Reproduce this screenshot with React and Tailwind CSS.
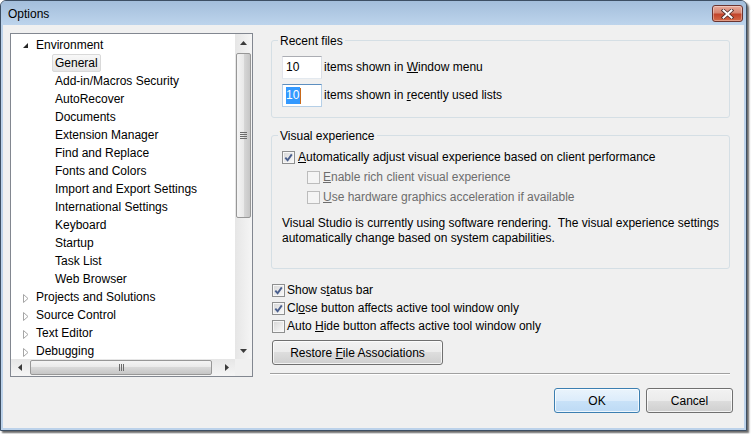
import React from "react";

const treeItems = [
  { label: "Environment", level: 0, open: true },
  { label: "General", level: 1, selected: true },
  { label: "Add-in/Macros Security", level: 1 },
  { label: "AutoRecover", level: 1 },
  { label: "Documents", level: 1 },
  { label: "Extension Manager", level: 1 },
  { label: "Find and Replace", level: 1 },
  { label: "Fonts and Colors", level: 1 },
  { label: "Import and Export Settings", level: 1 },
  { label: "International Settings", level: 1 },
  { label: "Keyboard", level: 1 },
  { label: "Startup", level: 1 },
  { label: "Task List", level: 1 },
  { label: "Web Browser", level: 1 },
  { label: "Projects and Solutions", level: 0 },
  { label: "Source Control", level: 0 },
  { label: "Text Editor", level: 0 },
  { label: "Debugging", level: 0 },
];

function Arrow({ dir }) {
  const pts = {
    up: "0,4 7,4 3.5,0",
    down: "0,0 7,0 3.5,4",
    left: "4,0 4,7 0,3.5",
    right: "0,0 0,7 4,3.5",
  }[dir];
  const vert = dir === "up" || dir === "down";
  return (
    <svg width={vert ? 7 : 4} height={vert ? 4 : 7} viewBox={vert ? "0 0 7 4" : "0 0 4 7"}>
      <polygon points={pts} fill="#3b3b3b" />
    </svg>
  );
}

function TreeRow({ item }) {
  if (item.level === 0) {
    return (
      <div className="h-[18px] flex items-center pl-[11px] whitespace-nowrap">
        <span className="w-[14px] flex items-center">
          {item.open ? (
            <svg width="7" height="7" viewBox="0 0 7 7">
              <polygon points="6,1 6,6 1,6" fill="#262626" />
            </svg>
          ) : (
            <svg width="7" height="9" viewBox="0 0 7 9" className="ml-[1px] mt-[2px]">
              <polygon points="0.5,0.5 0.5,8.5 5,4.5" fill="white" stroke="#a6a6a6" />
            </svg>
          )}
        </span>
        <span>{item.label}</span>
      </div>
    );
  }
  return (
    <div className="h-[18px] flex items-center whitespace-nowrap">
      <span
        className={`ml-[41px] px-[2px] h-[18px] leading-[16px] border rounded-[2px] ${
          item.selected
            ? "border-[#d9d9d9] bg-[linear-gradient(to_bottom,#f8f8f8,#e5e5e5)]"
            : "border-transparent"
        }`}
      >
        {item.label}
      </span>
    </div>
  );
}

function Tree() {
  return (
    <div className="w-[243px] h-[344px] border border-[#828790] bg-white flex flex-col">
      <div className="flex flex-1 min-h-0">
        <div className="flex-1 overflow-hidden pt-[2px]">
          {treeItems.map((it) => (
            <TreeRow key={it.label} item={it} />
          ))}
        </div>
        <div className="w-[17px] flex flex-col bg-[linear-gradient(to_right,#e6e6e6,#f5f5f5)]">
          <div className="h-[17px] flex items-center justify-center">
            <Arrow dir="up" />
          </div>
          <div className="mt-[2px] mx-[1px] h-[165px] rounded-[2px] border border-[#979797] bg-[linear-gradient(to_right,#f4f4f4,#e9e9e9_50%,#d8d8d8_50%,#c6c6c6)] flex flex-col items-center justify-center gap-[1px]">
            <div className="w-[7px] h-px bg-[#6b6b6b]" />
            <div className="w-[7px] h-px bg-[#6b6b6b]" />
            <div className="w-[7px] h-px bg-[#6b6b6b]" />
            <div className="w-[7px] h-px bg-[#6b6b6b]" />
          </div>
          <div className="flex-1" />
          <div className="h-[17px] flex items-center justify-center">
            <Arrow dir="down" />
          </div>
        </div>
      </div>
      <div className="flex h-[17px]">
        <div className="flex-1 flex items-center bg-[linear-gradient(to_bottom,#e6e6e6,#f5f5f5)]">
          <div className="w-[17px] h-[17px] flex items-center justify-center">
            <Arrow dir="left" />
          </div>
          <div className="ml-[2px] w-[182px] h-[15px] rounded-[2px] border border-[#979797] bg-[linear-gradient(to_bottom,#f4f4f4,#e9e9e9_50%,#d8d8d8_50%,#c6c6c6)] flex items-center justify-center gap-[1px]">
            <div className="w-px h-[7px] bg-[#6b6b6b]" />
            <div className="w-px h-[7px] bg-[#6b6b6b]" />
            <div className="w-px h-[7px] bg-[#6b6b6b]" />
          </div>
          <div className="flex-1" />
          <div className="w-[17px] h-[17px] flex items-center justify-center">
            <Arrow dir="right" />
          </div>
        </div>
        <div className="w-[17px] bg-[#f0f0f0]" />
      </div>
    </div>
  );
}

function Check({ checked, disabled }) {
  return (
    <span
      className={`w-[13px] h-[13px] shrink-0 border flex items-center justify-center ${
        disabled
          ? "border-[#bcbcbc] bg-[#f4f4f4]"
          : "border-[#8e8f8f] bg-[linear-gradient(135deg,#d6d6d6,#fbfbfb)] shadow-[inset_0_0_0_1px_#f7f7f7]"
      }`}
    >
      {checked && (
        <svg width="9" height="9" viewBox="0 0 9 9">
          <path d="M1.3 4.6 L3.6 7.2 L7.8 1.4" fill="none" stroke="#4a5f8d" strokeWidth="1.9" />
        </svg>
      )}
    </span>
  );
}

function WinButton({ children, primary, className = "" }) {
  return (
    <div
      className={`h-[25px] flex items-center justify-center rounded-[3px] border shadow-[inset_0_0_0_1px_rgba(255,255,255,0.75)] ${
        primary
          ? "border-[#3c7fb1] bg-[linear-gradient(to_bottom,#eaf4fc,#dcecfb_50%,#c9e2f8_50%,#bddaf5)]"
          : "border-[#707070] bg-[linear-gradient(to_bottom,#f2f2f2,#ebebeb_50%,#dddddd_50%,#cfcfcf)]"
      } ${className}`}
    >
      {children}
    </div>
  );
}

function CloseButton() {
  return (
    <div className="mt-[4px] w-[31px] h-[17px] rounded-[3px] border border-[#6a3430] bg-[linear-gradient(to_bottom,#e9aa9a,#d58470_45%,#c2442b_55%,#d56a48)] shadow-[inset_0_0_0_1px_rgba(255,255,255,0.35)] flex items-center justify-center">
      <svg width="13" height="10" viewBox="0 0 13 10">
        <path d="M2.5 1.5 L10.5 8.5 M10.5 1.5 L2.5 8.5" stroke="#4a2a28" strokeWidth="3.6" strokeLinecap="square" />
        <path d="M2.5 1.5 L10.5 8.5 M10.5 1.5 L2.5 8.5" stroke="#ffffff" strokeWidth="2" strokeLinecap="square" />
      </svg>
    </div>
  );
}

export default function App() {
  return (
    <div className="w-[751px] h-[434px] bg-white font-['Liberation_Sans',Arial,sans-serif] text-[12px] text-black">
      <div className="w-[747px] h-[431px] flex flex-col border border-[#3d4f64] rounded-t-[6px] bg-[#bcd2ea] shadow-[2px_2px_2px_rgba(0,0,0,0.6)]">
        {/* title bar */}
        <div className="h-[24px] flex justify-between pl-[7px] pr-[3px] rounded-t-[5px] bg-[linear-gradient(to_bottom,#a3bedb,#bdd4ec)]">
          <span className="leading-[26px]">Options</span>
          <CloseButton />
        </div>

        {/* client */}
        <div className="flex-1 mx-[2px] mb-[2px] bg-[#f0f0f0] flex flex-col">
          <div className="flex pl-[7px] pt-[8px]">
            <Tree />

            <div className="ml-[18px] w-[459px] flex flex-col">
              <fieldset className="m-0 border border-[#d5dfe5] rounded-[3px] px-[6px] pb-[10px]">
                <legend className="px-[2px] pt-[2px] leading-[13px]">Recent files</legend>
                <div className="pl-[4px] pt-[8px] flex flex-col gap-[5px]">
                  <div className="flex items-center gap-[2px]">
                    <div className="w-[40px] h-[23px] border border-[#abadb3] border-l-[#e2e3ea] border-r-[#dbdfe6] border-b-[#e3e9ef] bg-white pl-[3px] leading-[20px]">
                      10
                    </div>
                    <span className="-mt-[2px]">
                      items shown in <u>W</u>indow menu
                    </span>
                  </div>
                  <div className="flex items-center gap-[2px]">
                    <div className="w-[40px] h-[23px] border border-[#5d8fc0] border-l-[#b5cfe7] border-r-[#b5cfe7] border-b-[#b5cfe7] bg-white pl-[3px] flex items-center">
                      <span className="bg-[#3399ff] text-white leading-[17px] pr-[1px]">10</span>
                      <span className="w-px h-[16px] bg-[#c8691a]" />
                    </div>
                    <span className="-mt-[1px]">
                      items shown in <u>r</u>ecently used lists
                    </span>
                  </div>
                </div>
              </fieldset>

              <fieldset className="mt-[10px] m-0 border border-[#d5dfe5] rounded-[3px] px-[6px] pb-[22px]">
                <legend className="px-[2px] pt-[2px] leading-[13px]">Visual experience</legend>
                <div className="pl-[4px] pt-[4px] flex flex-col">
                  <div className="h-[20px] flex items-center gap-[3px] whitespace-nowrap">
                    <Check checked />
                    <span>
                      <u>A</u>utomatically adjust visual experience based on client performance
                    </span>
                  </div>
                  <div className="h-[20px] flex items-center gap-[3px] pl-[25px] text-[#6d6d6d] whitespace-nowrap">
                    <Check disabled />
                    <span>
                      <u>E</u>nable rich client visual experience
                    </span>
                  </div>
                  <div className="h-[20px] flex items-center gap-[3px] pl-[25px] text-[#6d6d6d] whitespace-nowrap">
                    <Check disabled />
                    <span>
                      <u>U</u>se hardware graphics acceleration if available
                    </span>
                  </div>
                  <p className="mt-[9px] leading-[15px] whitespace-pre">
                    {"Visual Studio is currently using software rendering.  The visual experience settings\nautomatically change based on system capabilities."}
                  </p>
                </div>
              </fieldset>

              <div className="mt-[12px] pl-[1px] flex flex-col">
                <div className="h-[18px] flex items-center gap-[2px]">
                  <Check checked />
                  <span>
                    Show s<u>t</u>atus bar
                  </span>
                </div>
                <div className="h-[18px] flex items-center gap-[2px]">
                  <Check checked />
                  <span>
                    Cl<u>o</u>se button affects active tool window only
                  </span>
                </div>
                <div className="h-[18px] flex items-center gap-[2px]">
                  <Check />
                  <span>
                    Auto <u>H</u>ide button affects active tool window only
                  </span>
                </div>
                <WinButton className="mt-[5px] w-[171px] h-[23px]">
                  <span>
                    Restore <u>F</u>ile Associations
                  </span>
                </WinButton>
              </div>

              <div className="mt-[8px] -ml-[1px] h-px bg-[#a0a0a0] border-b border-white box-content" />
            </div>
          </div>

          <div className="flex justify-end gap-[6px] pr-[11px] mt-[11px]">
            <WinButton primary className="w-[86px]">
              OK
            </WinButton>
            <WinButton className="w-[87px]">Cancel</WinButton>
          </div>
        </div>
      </div>
    </div>
  );
}
